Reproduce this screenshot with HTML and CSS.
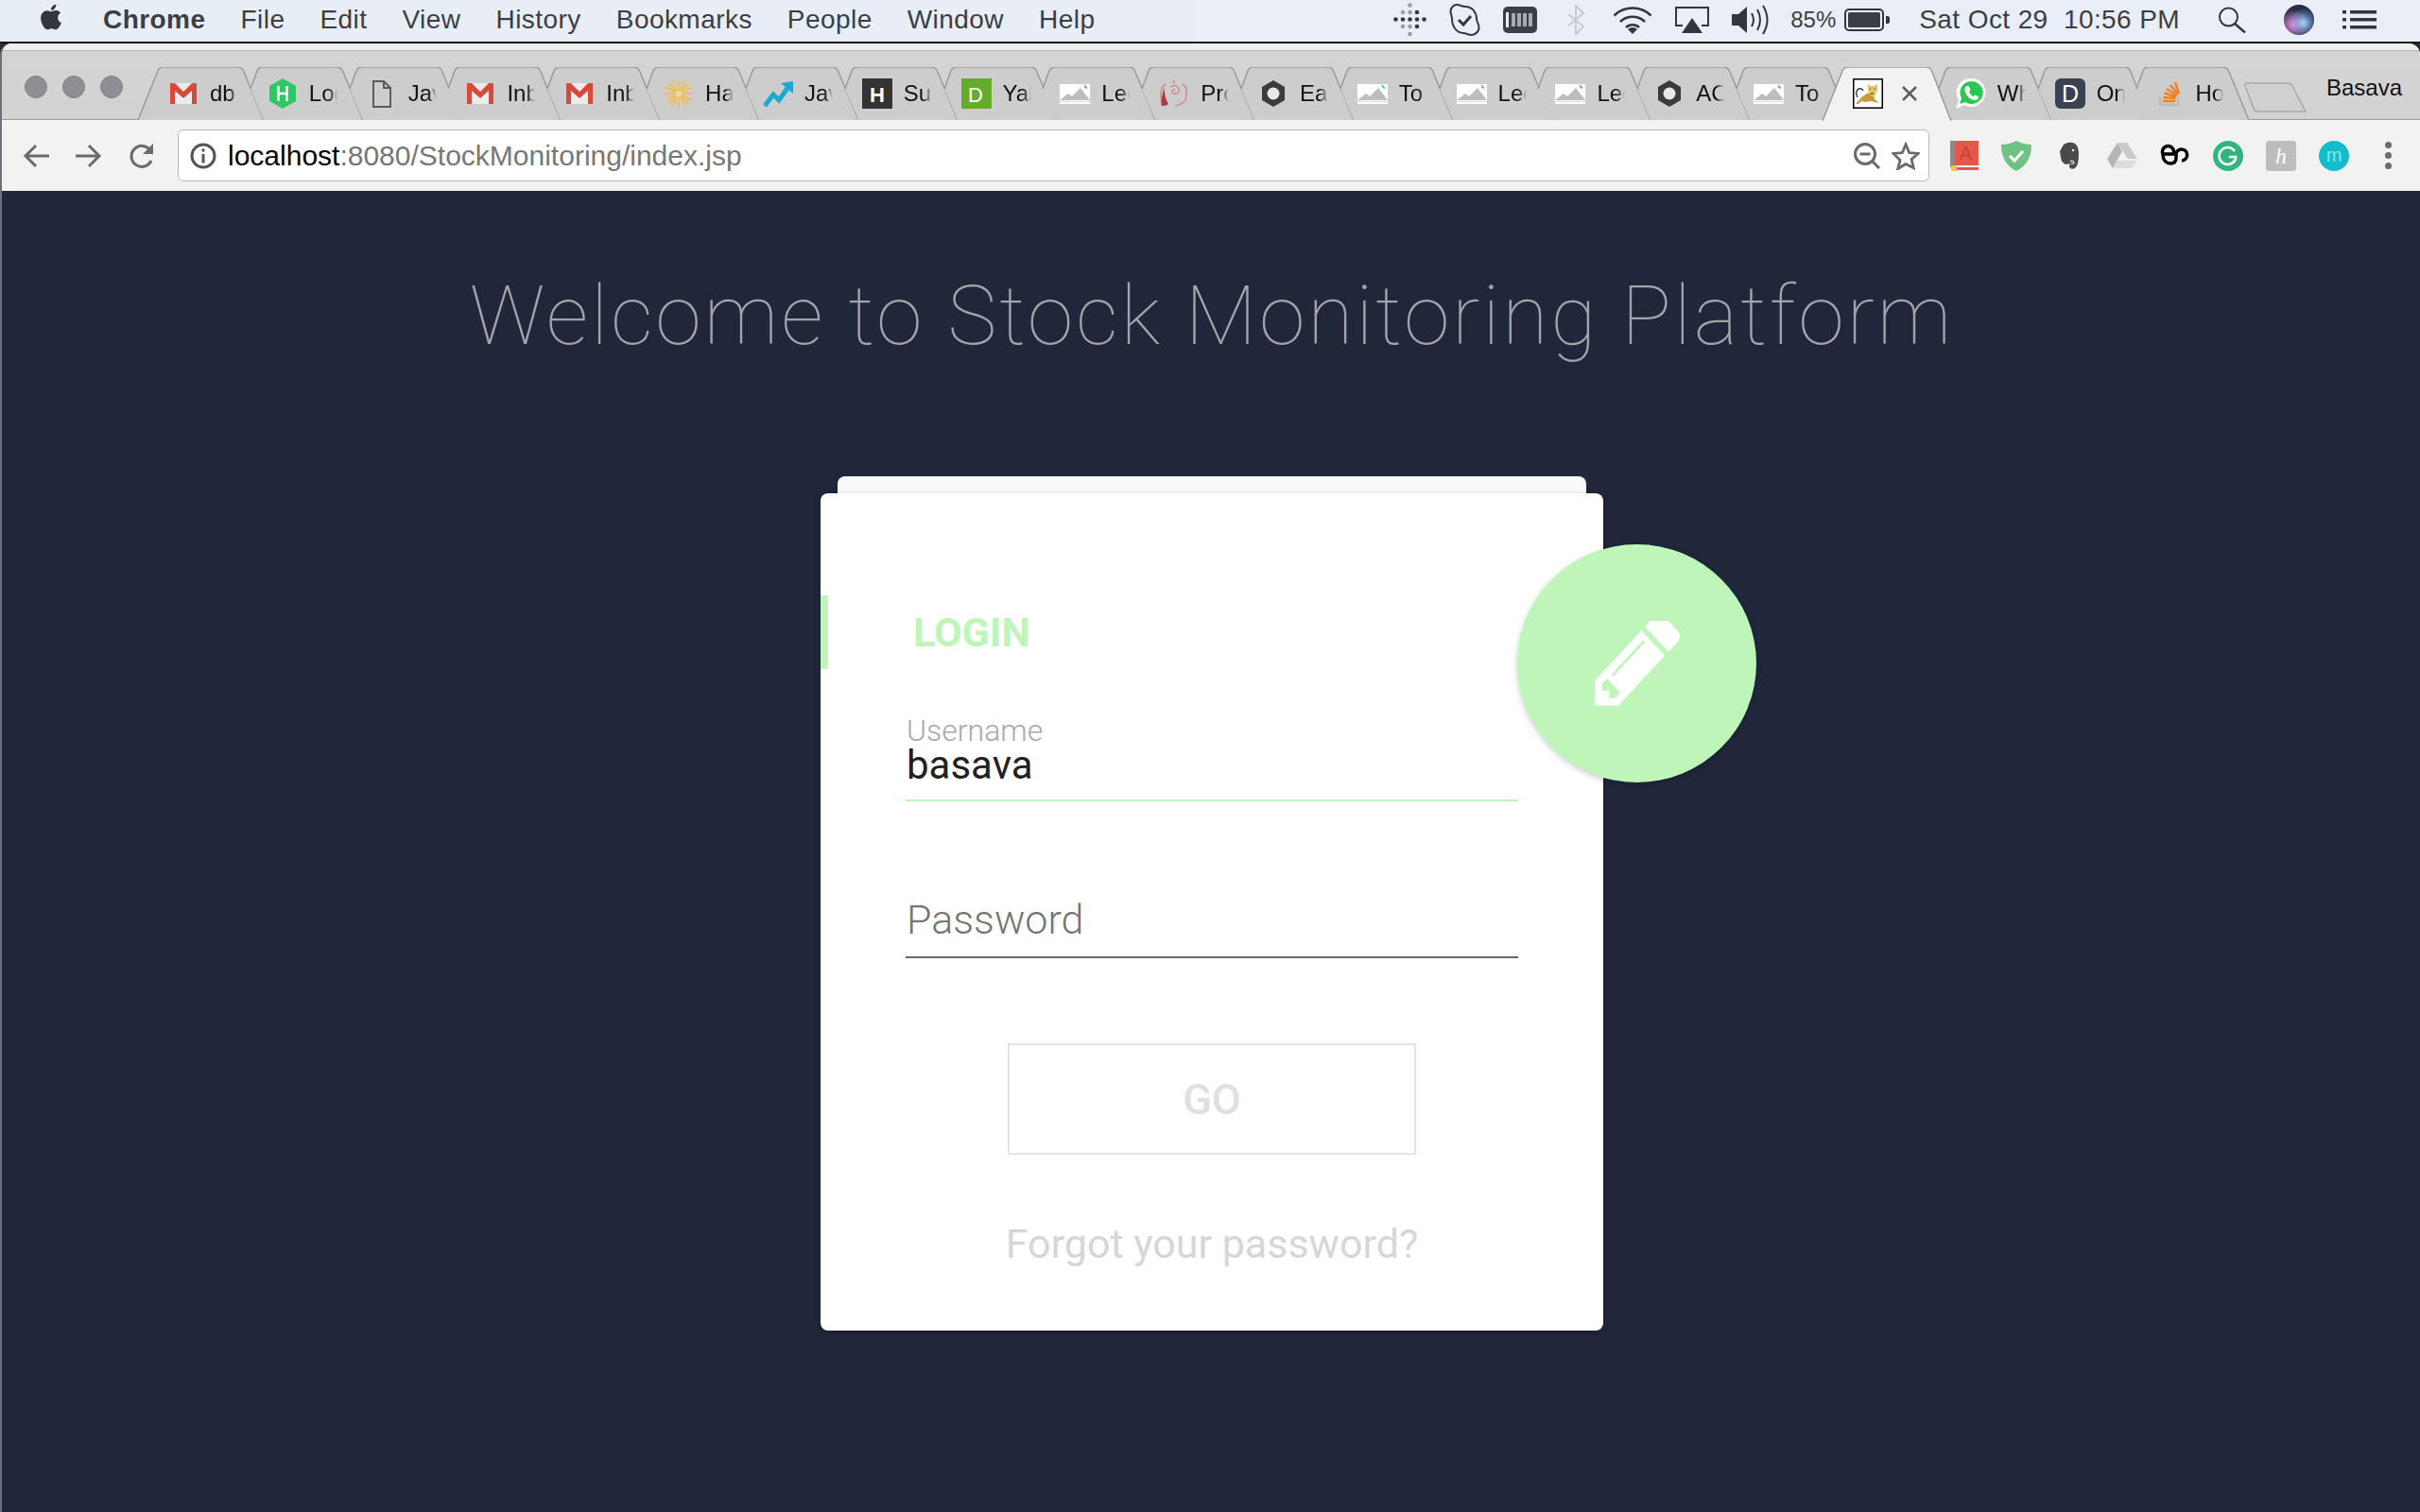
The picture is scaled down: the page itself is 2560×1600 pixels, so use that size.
FILE: index.html
```html
<!DOCTYPE html>
<html lang="en">
<head>
  <meta charset="UTF-8">
  <title>Stock Monitoring</title>
  <link rel="stylesheet" href="styles.css">
</head>
<body>
  <!-- shared favicons and tab shapes -->
  <svg class="defs" xmlns="http://www.w3.org/2000/svg">
    <symbol id="tab-bg" viewBox="0 0 133 56">
      <path fill="#cdcdcd" d="M14 23L21 4Q22.500 0 27 0H105Q110 0 111.500 4L133 56H28Z"/>
      <path fill="none" stroke="#9b9b9b" stroke-width="1.500" d="M14 23L21 4Q22.500 0 27 0H105Q110 0 111.500 4L133 56"/>
    </symbol>
    <symbol id="tab-first" viewBox="0 0 133 56">
      <path fill="#cdcdcd" stroke="#9b9b9b" stroke-width="1.500" d="M0 56L21 4Q22.500 0 27 0H105Q110 0 111.500 4L133 56"/>
    </symbol>
    <symbol id="tab-active" viewBox="0 0 136 57">
      <path fill="#f2f2f2" stroke="#9b9b9b" stroke-width="1.500" d="M0 57L21 4Q22.500 0 27 0H109Q114 0 115.500 4L136 57"/>
    </symbol>
    <symbol id="i-gmail" viewBox="0 0 32 32">
      <path fill="#ececec" d="M2 5h28v22H2z"/>
      <path fill="#d8493a" d="M2 5h5l9 9 9-9h5v22h-5V13l-9 8-9-8v14H2z"/>
    </symbol>
    <symbol id="i-hex" viewBox="0 0 32 32">
      <path fill="#2ec866" d="M16 0l14 8v16l-14 8-14-8V8z"/>
      <path fill="none" stroke="#fff" stroke-width="2.500" d="M11.500 8v16M20.500 8v16M11.500 16h9"/>
    </symbol>
    <symbol id="i-doc" viewBox="0 0 32 32">
      <path fill="none" stroke="#5b5b5b" stroke-width="2" d="M7 3h11l7 7v20H7zM18 3v7h7"/>
    </symbol>
    <symbol id="i-sun" viewBox="0 0 32 32">
      <path stroke="#f7bd3f" stroke-width="1.400" d="M16 0v32M0 16h32M5 5l22 22M27 5L5 27M9 2l14 28M23 2L9 30M2 9l28 14M30 9L2 23"/>
      <circle cx="16" cy="16" r="3.500" fill="#e6d9ad"/>
    </symbol>
    <symbol id="i-trend" viewBox="0 0 32 32">
      <path fill="none" stroke="#1ea8cf" stroke-width="5" d="M2 29l9-12 6 6 10-14"/>
      <path fill="#1ea8cf" d="M19 5l13-2v13z"/>
    </symbol>
    <symbol id="i-square-h" viewBox="0 0 32 32">
      <path fill="#333" d="M0 0h32v32H0z"/>
      <text x="16" y="25" class="svg-text" fill="#fff" font-size="22" font-weight="700" text-anchor="middle">H</text>
    </symbol>
    <symbol id="i-square-d" viewBox="0 0 32 32">
      <path fill="#63ad2a" d="M0 0h32v32H0z"/>
      <text x="15" y="25" class="svg-text" fill="#fff" font-size="22" text-anchor="middle">D</text>
    </symbol>
    <symbol id="i-img" viewBox="0 0 32 32">
      <path fill="#fff" d="M0 6h32v21H0z"/>
      <path fill="#bdbdbd" d="M0 23l9-7 4 3 9-9 10 13H0z"/>
      <path fill="#dedede" d="M0 24h32v1H0z"/>
      <path fill="none" stroke="#35a9d8" stroke-width="1.500" d="M27 7q-1 3 2 3"/>
    </symbol>
    <symbol id="i-pr" viewBox="0 0 32 32">
      <path fill="none" stroke="#d28a90" stroke-width="1.500" d="M7 6q-5 3-5 12 0 7 1 11M25 6q5 3 4 10 0 8-3 9-3 3-9 4M16 2v3M12 9q5-3 8 0 3 4-1 7-4 1-5-2 0-3 3-2"/>
      <path fill="#b5343f" d="M6 10q-4 8-3 19 5 0 7-2-5-8-4-17z"/>
    </symbol>
    <symbol id="i-ring" viewBox="0 0 32 32">
      <path fill="#3b3b3b" d="M16 2l12 7v14l-12 7-12-7V9z"/>
      <circle cx="16" cy="16" r="6.500" fill="#e8e8e8"/>
    </symbol>
    <symbol id="i-cat" viewBox="0 0 32 32">
      <path fill="#fff" stroke="#000" stroke-width="1.500" d="M.750.750h30.500v30.500H.750z"/>
      <path fill="none" stroke="#333" stroke-width="1.300" d="M5 20q-3-6 1-9 4-1 5 2"/>
      <path fill="#c79a3c" d="M3 27l6-7 6-4 6-2 2 8 5 4-9-2-6 1-4-1-3 3z"/>
      <path fill="#e9c75c" d="M16 6l3 2h4l3-3v8l-3 6h-3l-4-6z"/>
      <path stroke="#222" stroke-width="1" d="M18 11h1M22.500 11h1M19 16h3"/>
    </symbol>
    <symbol id="i-whats" viewBox="0 0 32 32">
      <path fill="#fff" d="M16 0a15 15 0 1 1-7 28L0 32l3-9A15 15 0 0 1 16 0z"/>
      <path fill="#29c94f" d="M16 3a12 12 0 1 1-6 22l-6 2 2-6A12 12 0 0 1 16 3z"/>
      <path fill="#fff" d="M11 8c-2 2-2 4-1 7 2 4 5 7 9 8 3 .5 5-1 5-3.500l-3.500-2-2 1.500c-2-1-3.500-2.500-4.500-5l1.500-2-2-4z"/>
    </symbol>
    <symbol id="i-round-d" viewBox="0 0 32 32">
      <rect width="32" height="32" rx="6" fill="#3b4151"/>
      <text x="16" y="25" class="svg-text" fill="#fff" font-size="25" text-anchor="middle">D</text>
    </symbol>
    <symbol id="i-so" viewBox="0 0 32 32">
      <path fill="none" stroke="#bcbbbb" stroke-width="2.500" d="M7 20v8h19v-8"/>
      <path stroke="#f48024" stroke-width="2.500" d="M10 24h13M10.500 20l13 1M11.500 15.500l12.500 4M14 11l11 7M18 7l8 10M23 4l4 12"/>
    </symbol>
  </svg>

  <div class="menubar">
    <svg class="apple" viewBox="0 0 24 24"><path fill="#33373d" d="M18.710 19.500c-.830 1.240-1.710 2.450-3.050 2.470-1.340.030-1.770-.790-3.290-.790-1.530 0-2 .770-3.270.820-1.310.050-2.300-1.320-3.140-2.530C4.250 17 2.940 12.450 4.700 9.390c.870-1.520 2.430-2.480 4.120-2.510 1.280-.020 2.500.870 3.290.870.780 0 2.260-1.070 3.810-.910.650.030 2.470.260 3.640 1.980-.090.060-2.170 1.280-2.150 3.810.030 3.020 2.650 4.030 2.680 4.040-.030.070-.420 1.440-1.380 2.830M13 3.500c.730-.830 1.940-1.460 2.940-1.500.130 1.170-.340 2.350-1.040 3.190-.690.850-1.830 1.510-2.950 1.420-.150-1.150.410-2.350 1.050-3.110z"/></svg>
    <span class="menu-app">Chrome</span>
    <span>File</span>
    <span>Edit</span>
    <span>View</span>
    <span>History</span>
    <span>Bookmarks</span>
    <span>People</span>
    <span>Window</span>
    <span>Help</span>

    <div class="status">
      <svg class="st-fitbit" viewBox="0 0 36 36">
        <g fill="#9b9ea3"><circle cx="17.500" cy="2.500" r="2.300"/><circle cx="10" cy="10" r="2.300"/><circle cx="17.500" cy="10" r="2.300"/><circle cx="10" cy="25" r="2.300"/><circle cx="17.500" cy="25" r="2.300"/><circle cx="17.500" cy="33" r="2.300"/></g>
        <g fill="#33373d"><circle cx="25" cy="10" r="2.300"/><circle cx="2.500" cy="17.500" r="2.300"/><circle cx="10" cy="17.500" r="2.300"/><circle cx="17.500" cy="17.500" r="2.300"/><circle cx="25" cy="17.500" r="2.300"/><circle cx="32.500" cy="17.500" r="2.300"/><circle cx="25" cy="25" r="2.300"/></g>
      </svg>
      <svg class="st-skype" viewBox="0 0 33 36"><path fill="none" stroke="#33373d" stroke-width="2" d="M8 2C12 2 13 4 17 4 25 4 29 11 29 17 29 20 31.500 22 31.500 26 31.500 31 27 34 23 34 20 34 18 32 15 32 8 32 3 25 3 17 3 14 1.500 12 1.500 9 1.500 5 5 2 8 2Z"/><path fill="none" stroke="#33373d" stroke-width="3" d="M10 18l5 5 8-9"/></svg>
      <svg class="st-meter" viewBox="0 0 36 28"><rect width="36" height="28" rx="5" fill="#3b3e47"/><path fill="#e8eef6" d="M3 6h3v16H3z"/><path fill="#a7a9ad" d="M9 7h4v14H9zM15 7h4v14h-4zM21 7h4v14h-4zM27 7h4v14h-4z"/></svg>
      <svg class="st-blue" viewBox="0 0 20 32"><path fill="none" stroke="#c6cbd2" stroke-width="2" d="M2 10l16 13-8 8V1l8 8L2 22"/></svg>
      <svg class="st-wifi" viewBox="0 0 42 30"><g fill="none" stroke="#33373d" stroke-width="2.500"><path d="M1.500 10.500a28 28 0 0 1 39 0"/><path d="M8 17a19 19 0 0 1 26 0"/><path d="M14 23a10 10 0 0 1 14 0"/></g><path fill="#33373d" d="M21 30l-5-5a7 7 0 0 1 10 0z"/></svg>
      <svg class="st-air" viewBox="0 0 36 28"><path fill="none" stroke="#33373d" stroke-width="2" d="M8 20H1V1h34v19h-7"/><path fill="#33373d" d="M18 12l11 16H7z"/></svg>
      <svg class="st-vol" viewBox="0 0 41 32"><path fill="#33373d" d="M0 10h7l9-8v28l-9-8H0z"/><g fill="none" stroke="#33373d" stroke-width="2"><path d="M21 9q4 7 0 14"/><path d="M27 5q6 11 0 22"/><path d="M33 1q9 15 0 30"/></g></svg>
      <span class="st-pct">85%</span>
      <svg class="st-batt" viewBox="0 0 48 24"><rect x="1" y="1" width="40" height="22" rx="4" fill="none" stroke="#33373d" stroke-width="2"/><rect x="4" y="4" width="34" height="16" rx="1.500" fill="#3b3e47"/><path fill="#33373d" d="M44 8h2q2 0 2 2v4q0 2-2 2h-2z"/></svg>
      <span class="st-date">Sat Oct 29  10:56 PM</span>
      <svg class="st-search" viewBox="0 0 30 28"><circle cx="11.500" cy="11" r="9.500" fill="none" stroke="#33373d" stroke-width="2"/><path stroke="#33373d" stroke-width="2.500" d="M18 18l11 9.500"/></svg>
      <svg class="st-siri" viewBox="0 0 32 32">
        <defs>
          <radialGradient id="siri-a" cx=".3" cy=".65" r=".5"><stop offset="0" stop-color="#f08ad8"/><stop offset="1" stop-color="#f08ad8" stop-opacity="0"/></radialGradient>
          <radialGradient id="siri-b" cx=".65" cy=".6" r=".5"><stop offset="0" stop-color="#a9d6ff"/><stop offset="1" stop-color="#6d9ee8" stop-opacity="0"/></radialGradient>
        </defs>
        <circle cx="16" cy="16" r="16" fill="#262b46"/>
        <circle cx="16" cy="16" r="16" fill="url(#siri-a)"/>
        <circle cx="16" cy="16" r="16" fill="url(#siri-b)"/>
      </svg>
      <svg class="st-list" viewBox="0 0 36 20"><path fill="#33373d" d="M0 0h4v3.500H0zM8 0h28v3.500H8zM0 8h4v3.500H0zM8 8h28v3.500H8zM0 16h4v3.500H0zM8 16h28v3.500H8z"/></svg>
    </div>
  </div>

  <div class="window">
    <div class="tabstrip">
      <div class="lights"><i></i><i></i><i></i></div>
      <div class="tabs">
        <div class="tab"><svg class="tab-shape"><use href="#tab-first"/></svg><svg class="fav"><use href="#i-gmail"/></svg><span class="tab-label">db</span></div>
        <div class="tab"><svg class="tab-shape"><use href="#tab-bg"/></svg><svg class="fav"><use href="#i-hex"/></svg><span class="tab-label">Log</span></div>
        <div class="tab"><svg class="tab-shape"><use href="#tab-bg"/></svg><svg class="fav"><use href="#i-doc"/></svg><span class="tab-label">Jav</span></div>
        <div class="tab"><svg class="tab-shape"><use href="#tab-bg"/></svg><svg class="fav"><use href="#i-gmail"/></svg><span class="tab-label">Inb</span></div>
        <div class="tab"><svg class="tab-shape"><use href="#tab-bg"/></svg><svg class="fav"><use href="#i-gmail"/></svg><span class="tab-label">Inb</span></div>
        <div class="tab"><svg class="tab-shape"><use href="#tab-bg"/></svg><svg class="fav"><use href="#i-sun"/></svg><span class="tab-label">Ha</span></div>
        <div class="tab"><svg class="tab-shape"><use href="#tab-bg"/></svg><svg class="fav"><use href="#i-trend"/></svg><span class="tab-label">Jav</span></div>
        <div class="tab"><svg class="tab-shape"><use href="#tab-bg"/></svg><svg class="fav"><use href="#i-square-h"/></svg><span class="tab-label">Sub</span></div>
        <div class="tab"><svg class="tab-shape"><use href="#tab-bg"/></svg><svg class="fav"><use href="#i-square-d"/></svg><span class="tab-label">Yal</span></div>
        <div class="tab"><svg class="tab-shape"><use href="#tab-bg"/></svg><svg class="fav"><use href="#i-img"/></svg><span class="tab-label">Lee</span></div>
        <div class="tab"><svg class="tab-shape"><use href="#tab-bg"/></svg><svg class="fav"><use href="#i-pr"/></svg><span class="tab-label">Pro</span></div>
        <div class="tab"><svg class="tab-shape"><use href="#tab-bg"/></svg><svg class="fav"><use href="#i-ring"/></svg><span class="tab-label">Eas</span></div>
        <div class="tab"><svg class="tab-shape"><use href="#tab-bg"/></svg><svg class="fav"><use href="#i-img"/></svg><span class="tab-label">To</span></div>
        <div class="tab"><svg class="tab-shape"><use href="#tab-bg"/></svg><svg class="fav"><use href="#i-img"/></svg><span class="tab-label">Lee</span></div>
        <div class="tab"><svg class="tab-shape"><use href="#tab-bg"/></svg><svg class="fav"><use href="#i-img"/></svg><span class="tab-label">Lee</span></div>
        <div class="tab"><svg class="tab-shape"><use href="#tab-bg"/></svg><svg class="fav"><use href="#i-ring"/></svg><span class="tab-label">AC</span></div>
        <div class="tab"><svg class="tab-shape"><use href="#tab-bg"/></svg><svg class="fav"><use href="#i-img"/></svg><span class="tab-label">To</span></div>
        <div class="tab tab-current"><svg class="tab-shape"><use href="#tab-active"/></svg><svg class="fav"><use href="#i-cat"/></svg><svg class="tab-close" viewBox="0 0 16 16"><path stroke="#5f5f5f" stroke-width="2.500" d="M1 1l14 14M15 1L1 15"/></svg></div>
        <div class="tab"><svg class="tab-shape"><use href="#tab-bg"/></svg><svg class="fav"><use href="#i-whats"/></svg><span class="tab-label">Wh</span></div>
        <div class="tab"><svg class="tab-shape"><use href="#tab-bg"/></svg><svg class="fav"><use href="#i-round-d"/></svg><span class="tab-label">On</span></div>
        <div class="tab"><svg class="tab-shape"><use href="#tab-bg"/></svg><svg class="fav"><use href="#i-so"/></svg><span class="tab-label">Ho</span></div>
      </div>
      <svg class="new-tab" viewBox="0 0 66 32"><path fill="#d0d0d0" stroke="#a9a9a9" stroke-width="1.500" d="M3 1H46Q50 1 51 4L65 31H14Q11 31 10 28L1 4Q0 1 3 1Z"/></svg>
      <span class="profile">Basava</span>
    </div>

    <div class="toolbar">
      <svg class="nav-btn" viewBox="0 0 28 28"><path fill="none" stroke="#6a6a6a" stroke-width="3" d="M28 14H3M14 3L3 14l11 11"/></svg>
      <svg class="nav-btn" viewBox="0 0 28 28"><path fill="none" stroke="#6a6a6a" stroke-width="3" d="M0 14h25M14 3l11 11-11 11"/></svg>
      <svg class="nav-btn" viewBox="0 0 28 28"><path fill="none" stroke="#6a6a6a" stroke-width="3" d="M24 19a11 11 0 1 1-1-11"/><path fill="#6a6a6a" d="M26 1v11H15z"/></svg>
      <div class="omnibox">
        <svg class="info" viewBox="0 0 28 28"><circle cx="14" cy="14" r="12" fill="none" stroke="#555" stroke-width="3"/><path fill="#555" d="M12.500 6.500h3v3h-3zM12.500 12h3v9.500h-3z"/></svg>
        <span class="url"><b>localhost</b>:8080/StockMonitoring/index.jsp</span>
        <svg class="omni-zoom" viewBox="0 0 28 28"><circle cx="12" cy="12" r="10.500" fill="none" stroke="#6a6a6a" stroke-width="3"/><path stroke="#6a6a6a" stroke-width="3" d="M6.500 12h11M19 19l8 8"/></svg>
        <svg class="omni-star" viewBox="0 0 32 32"><path fill="none" stroke="#6a6a6a" stroke-width="3" d="M16 3l4 9.500 10 .8-7.600 6.500 2.400 9.700L16 25l-8.800 5.500 2.400-9.700L2 13.300l10-.8z"/></svg>
      </div>
      <div class="extensions">
        <svg viewBox="0 0 32 32"><path fill="#e5574a" d="M5 0h27v26H5z"/><path fill="#8a8a8a" d="M2 0h5v28H2z"/><text x="18.500" y="20" class="svg-text" fill="#c63f35" font-size="20" text-anchor="middle">A</text><path fill="#e5574a" d="M9 28h23v3H9z"/><path fill="#e8c35a" d="M3 26h6v6H3z"/></svg>
        <svg viewBox="0 0 32 32"><path fill="#6fc283" d="M16 0q8 4 16 4 0 20-16 28Q0 24 0 4q8 0 16-4z"/><path fill="none" stroke="#fff" stroke-width="3" d="M9 16l5 5 9-10"/></svg>
        <svg viewBox="0 0 32 32"><path fill="#4a4a4a" d="M10 4l4-2q5-1 8 1 4 3 4 11 0 10-3 14-3 3-6 1-2-2 0-5l-4 1q-5-1-6-7l-1-7z"/><circle cx="20" cy="10" r="1.200" fill="#eee"/><path fill="none" stroke="#eee" stroke-width="1.200" d="M17 22q3-2 4 1-1 2-3 1"/></svg>
        <svg viewBox="0 0 32 32"><path fill="#c9c9c9" d="M11 2h10l11 17H22z"/><path fill="#b5b5b5" d="M11 2l5 9-10 18-6-10z"/><path fill="#dcdcdc" d="M10 21h22l-6 8H6z"/></svg>
        <svg viewBox="0 0 32 32"><path fill="none" stroke="#000" stroke-width="3.500" d="M3 14h11a6 6 0 1 0-11 0c0 7 4 10 8 10s6-2 6-6v-5a6 6 0 1 1 6 8"/></svg>
        <svg viewBox="0 0 32 32"><circle cx="16" cy="16" r="16" fill="#2fb67e"/><path fill="none" stroke="#fff" stroke-width="2.500" d="M23 11a9 9 0 1 0 1 8v-2h-7"/></svg>
        <svg viewBox="0 0 32 32"><rect width="32" height="32" rx="3" fill="#bdbdbd"/><text x="16" y="24" class="svg-serif" fill="#fff" font-size="24" font-style="italic" text-anchor="middle">h</text></svg>
        <svg viewBox="0 0 32 32"><circle cx="16" cy="16" r="16" fill="#12bccb"/><text x="16" y="22" class="svg-text" fill="#8fe3e8" font-size="20" text-anchor="middle">m</text></svg>
        <div class="more"><i></i><i></i><i></i></div>
      </div>
    </div>

    <div class="page">
      <h1 class="title">Welcome to Stock Monitoring Platform</h1>
      <div class="card-back"></div>
      <div class="card">
        <div class="fab">
          <svg viewBox="128 256 1515 1408" preserveAspectRatio="none"><path fill="#fff" d="M491 1536l91-91-235-235-91 91v107h128v128h107zm523-928q0-22-22-22-10 0-17 7l-542 542q-7 7-7 17 0 22 22 22 10 0 17-7l542-542q7-7 7-17zm-54-192l416 416-832 832h-416v-416zm683 96q0 53-37 90l-166 166-416-416 166-165q36-38 90-38 53 0 91 38l235 234q37 39 37 91z"/></svg>
        </div>
        <h2 class="card-title">LOGIN</h2>
        <form class="form">
          <div class="field field-user">
            <label for="username">Username</label>
            <input id="username" type="text" value="basava">
          </div>
          <div class="field field-pass">
            <input type="password" placeholder="Password">
          </div>
          <button class="go" type="button">GO</button>
          <a class="forgot" href="#">Forgot your password?</a>
        </form>
      </div>
    </div>
  </div>
</body>
</html>
```

FILE: styles.css
```css
* {
  box-sizing: border-box;
}
html, body {
  margin: 0;
  height: 1600px;
  overflow: hidden;
}
body {
  background: #2b2e36;
  font-family: "Liberation Sans", Arial, sans-serif;
}
.defs {
  width: 0;
  height: 0;
  position: absolute;
}
.svg-text {
  font-family: "Liberation Sans", Arial, sans-serif;
}
.svg-serif {
  font-family: "Liberation Serif", serif;
}

/* mac menu bar */
.menubar {
  height: 46px;
  display: flex;
  align-items: center;
  gap: 37px;
  padding: 0 0 2px 42px;
  background: linear-gradient(90deg, #e8eef6, #eaeff7);
  border-bottom: 2px solid #15171b;
  color: #3a3e45;
  font-size: 28px;
  letter-spacing: .45px;
  white-space: pre;
}
.apple {
  width: 32px;
  height: 36px;
  margin: -6px 2px 0 -4px;
}
.menu-app {
  font-weight: 700;
}
.status {
  margin-left: auto;
  display: flex;
  align-items: center;
  padding-right: 46px;
}
.st-fitbit { width: 36px; height: 36px; }
.st-skype { width: 33px; height: 36px; margin-left: 23px; }
.st-meter { width: 36px; height: 28px; margin-left: 24px; }
.st-blue { width: 20px; height: 32px; margin-left: 31px; }
.st-wifi { width: 42px; height: 30px; margin-left: 29px; }
.st-air { width: 36px; height: 28px; margin-left: 24px; }
.st-vol { width: 41px; height: 32px; margin-left: 24px; }
.st-pct { margin-left: 21px; font-size: 24px; letter-spacing: 0; }
.st-batt { width: 48px; height: 24px; margin-left: 9px; }
.st-date { margin-left: 31px; letter-spacing: .4px; }
.st-search { width: 30px; height: 28px; margin-left: 40px; }
.st-siri { width: 32px; height: 32px; margin-left: 40px; }
.st-list { width: 36px; height: 20px; margin-left: 30px; }

/* browser window */
.window {
  height: 1554px;
  display: flex;
  flex-direction: column;
  border-left: 2px solid #6f7178;
  border-radius: 12px 12px 0 0;
  background: #f0f0f0;
  overflow: hidden;
}
.tabstrip {
  position: relative;
  height: 81px;
  flex-shrink: 0;
  padding-top: 7px;
  display: flex;
  align-items: flex-end;
  background: linear-gradient(#f0f0f0 7px, #b9b9b9 7px, #b9b9b9 8px, #d4d4d4 8px, #d2d2d2 80px, #9b9b9b 80px);
}
.lights {
  width: 144px;
  align-self: flex-start;
  padding: 27px 0 0 24px;
  display: flex;
  gap: 16px;
}
.lights i {
  width: 24px;
  height: 24px;
  border-radius: 50%;
  background: #908e94;
  border: 1px solid #807e84;
}
.tabs {
  display: flex;
  height: 56px;
}
.tab {
  position: relative;
  width: 133px;
  height: 56px;
  margin-right: -28.2px;
  padding-left: 32px;
  display: flex;
  align-items: center;
  gap: 12px;
  font-size: 24px;
  color: #111;
}
.tab-shape {
  position: absolute;
  left: 0;
  top: 0;
  width: 100%;
  height: 100%;
  overflow: visible;
}
.tab-current {
  z-index: 1;
  margin-right: -24px;
}
.tab-current .tab-shape {
  width: 136px;
  height: 57px;
}
.fav {
  position: relative;
  width: 32px;
  height: 32px;
  flex-shrink: 0;
}
.tab-label {
  position: relative;
  width: 30px;
  overflow: hidden;
  white-space: nowrap;
  -webkit-mask-image: linear-gradient(90deg, #000 70%, transparent);
  mask-image: linear-gradient(90deg, #000 70%, transparent);
}
.tab-close {
  position: relative;
  width: 16px;
  height: 16px;
  margin-left: 8px;
}
.new-tab {
  position: absolute;
  left: 2372px;
  top: 41px;
  width: 66px;
  height: 32px;
}
.profile {
  margin-left: auto;
  align-self: flex-start;
  padding: 26px 19px 0 0;
  font-size: 24px;
  color: #111;
}

.toolbar {
  height: 75px;
  flex-shrink: 0;
  display: flex;
  align-items: center;
  padding-left: 22px;
  background: #f2f2f2;
}
.nav-btn {
  width: 28px;
  height: 28px;
  margin-right: 28px;
}
.nav-btn:nth-child(3) {
  margin-right: 24px;
}
.omnibox {
  width: 1853px;
  height: 55px;
  display: flex;
  align-items: center;
  padding: 0 9px 0 12px;
  background: #fff;
  border: 1.500px solid #b7b7b7;
  border-radius: 6px;
}
.info {
  width: 28px;
  height: 28px;
}
.url {
  margin-left: 12px;
  font-size: 30px;
  color: #777;
  flex: 1;
}
.url b {
  font-weight: 400;
  color: #000;
}
.omni-zoom {
  width: 28px;
  height: 28px;
}
.omni-star {
  width: 30px;
  height: 30px;
  margin-left: 12px;
}
.extensions {
  display: flex;
  align-items: center;
  gap: 24px;
  padding-left: 20px;
}
.extensions svg {
  width: 32px;
  height: 32px;
}
.more {
  display: flex;
  flex-direction: column;
  gap: 4px;
  margin-left: 14px;
}
.more i {
  width: 7px;
  height: 7px;
  border-radius: 50%;
  background: #6b6b6b;
}

/* login page */
.page {
  flex: 1;
  display: flex;
  flex-direction: column;
  align-items: center;
  padding-left: 2px;
  background: #20273a;
  font-family: Roboto, sans-serif;
}
.title {
  margin: 82px 0 120px;
  font-size: 88px;
  line-height: 100px;
  font-weight: 100;
  letter-spacing: 2.8px;
  color: #a3a3ab;
  white-space: nowrap;
}
.card-back {
  width: 792px;
  height: 18px;
  background: #fafafa;
  border-radius: 8px 8px 0 0;
}
.card {
  position: relative;
  width: 828px;
  height: 886px;
  padding-top: 108px;
  background: #fff;
  border-radius: 8px;
  box-shadow: 0 2px 6px rgba(0, 0, 0, .25);
}
.fab {
  position: absolute;
  left: 737px;
  top: 54px;
  width: 253px;
  height: 252px;
  display: flex;
  align-items: center;
  justify-content: center;
  border-radius: 50%;
  background: #bef5b8;
  box-shadow: 0 2px 6px rgba(0, 0, 0, .2);
}
.fab svg {
  width: 90px;
  height: 90px;
}
.card-title {
  margin: 0;
  height: 78px;
  padding-left: 90px;
  border-left: 8px solid #bef5b8;
  font-size: 43px;
  line-height: 78px;
  font-weight: 700;
  color: #bef5b8;
}
.form {
  padding: 50px 90px 0;
  display: flex;
  flex-direction: column;
}
.field label {
  display: block;
  padding-left: 1px;
  font-size: 32px;
  line-height: 30px;
  font-weight: 300;
  color: #a8a8a8;
}
.field input {
  display: block;
  width: 100%;
  height: 62px;
  padding: 0 0 18px 1px;
  border: 0;
  border-bottom: 2px solid #6a6a6a;
  outline: 0;
  background: none;
  font-family: inherit;
  font-size: 43px;
  line-height: 42px;
  font-weight: 300;
  color: #212121;
}
.field input::placeholder {
  color: #757575;
  opacity: 1;
}
.field-user input {
  height: 60px;
  padding-bottom: 16px;
  border-bottom-color: #bef5b8;
  font-size: 42px;
  font-weight: 400;
}
.field-pass {
  margin-top: 104px;
}
.go {
  width: 432px;
  height: 118px;
  margin: 90px auto 0;
  background: #fff;
  border: 2px solid #e4e4e4;
  font-family: inherit;
  font-size: 45px;
  font-weight: 500;
  color: #e0e0e0;
}
.forgot {
  margin-top: 70px;
  text-align: center;
  font-size: 43px;
  line-height: 48px;
  font-weight: 400;
  color: #d6d6d6;
  text-decoration: none;
}
```
